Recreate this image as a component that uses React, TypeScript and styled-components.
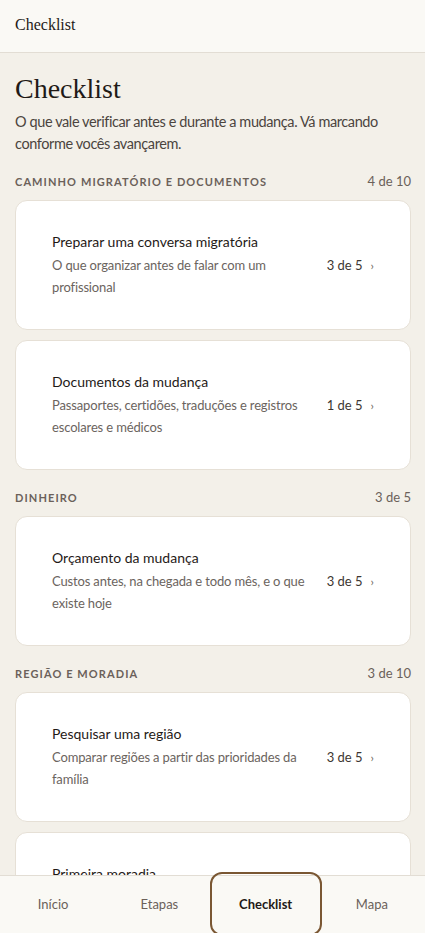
import styled, { createGlobalStyle } from "styled-components";

const GlobalStyle = createGlobalStyle`
    html, body {
        margin: 0;
        padding: 0;
        background: #f3f0e9;
    }
    body {
        font-family: Lato, "Noto Sans", sans-serif;
        color: #2a2420;
    }
    * {
        box-sizing: border-box;
    }
`;

type Item = {
    title: string;
    desc: string;
    done: number;
    total: number;
};

type Group = {
    label: string;
    done: number;
    total: number;
    items: Item[];
};

const groups: Group[] = [
    {
        label: "Caminho migratório e documentos",
        done: 4,
        total: 10,
        items: [
            { title: "Preparar uma conversa migratória", desc: "O que organizar antes de falar com um profissional", done: 3, total: 5 },
            { title: "Documentos da mudança", desc: "Passaportes, certidões, traduções e registros escolares e médicos", done: 1, total: 5 },
        ],
    },
    {
        label: "Dinheiro",
        done: 3,
        total: 5,
        items: [
            { title: "Orçamento da mudança", desc: "Custos antes, na chegada e todo mês, e o que existe hoje", done: 3, total: 5 },
        ],
    },
    {
        label: "Região e moradia",
        done: 3,
        total: 10,
        items: [
            { title: "Pesquisar uma região", desc: "Comparar regiões a partir das prioridades da família", done: 3, total: 5 },
            { title: "Primeira moradia", desc: "O que olhar antes de assinar o primeiro contrato", done: 0, total: 5 },
        ],
    },
];

const tabs = ["Início", "Etapas", "Checklist", "Mapa"];

const App = () => {
    return (
        <Page>
            <GlobalStyle />
            <TopBar>
                <TopTitle>Checklist</TopTitle>
            </TopBar>
            <Main>
                <PageTitle>Checklist</PageTitle>
                <Intro>O que vale verificar antes e durante a mudança. Vá marcando conforme vocês avançarem.</Intro>
                {groups.map((group) => (
                    <Section key={group.label}>
                        <SectionHead>
                            <SectionLabel>{group.label}</SectionLabel>
                            <SectionCount>{group.done} de {group.total}</SectionCount>
                        </SectionHead>
                        <CardList>
                            {group.items.map((item) => (
                                <Card key={item.title}>
                                    <CardText>
                                        <CardTitle>{item.title}</CardTitle>
                                        <CardDesc>{item.desc}</CardDesc>
                                    </CardText>
                                    <CardMeta>
                                        {item.done} de {item.total}
                                        <Chevron>›</Chevron>
                                    </CardMeta>
                                </Card>
                            ))}
                        </CardList>
                    </Section>
                ))}
            </Main>
            <BottomNav>
                {tabs.map((tab) => (
                    <Tab key={tab} active={tab === "Checklist"}>{tab}</Tab>
                ))}
            </BottomNav>
        </Page>
    );
};

export default App;

const Page = styled.div`
    min-height: 100vh;
    background: #f3f0e9;
`;

const TopBar = styled.header`
    height: 53px;
    display: flex;
    align-items: center;
    padding: 0 15px;
    background: #faf9f5;
    border-bottom: 1px solid #e2ddd4;
`;

const TopTitle = styled.span`
    font-family: "Liberation Serif", serif;
    font-size: 16px;
    color: #1f1a17;
    margin-top: -2px;
`;

const Main = styled.main`
    padding: 20px 14px 120px 15px;
`;

const PageTitle = styled.h1`
    margin: 0;
    font-family: "Liberation Serif", serif;
    font-weight: 400;
    font-size: 28px;
    line-height: 32px;
    color: #1f1a17;
`;

const Intro = styled.p`
    margin: 6px 0 0;
    font-size: 14.5px;
    letter-spacing: -0.4px;
    line-height: 22px;
    color: #4b443e;
`;

const Section = styled.section`
    margin-top: 16px;

    & + & {
        margin-top: 17px;
    }
`;

const SectionHead = styled.div`
    display: flex;
    align-items: center;
    justify-content: space-between;
    height: 20px;
    margin-bottom: 9px;
`;

const SectionLabel = styled.span`
    font-size: 11px;
    font-weight: 700;
    letter-spacing: 1.1px;
    text-transform: uppercase;
    color: #6b615a;
`;

const SectionCount = styled.span`
    font-size: 13px;
    color: #6b615a;
`;

const CardList = styled.div`
    display: flex;
    flex-direction: column;
    gap: 10px;
`;

const Card = styled.div`
    display: flex;
    align-items: center;
    gap: 10px;
    min-height: 130px;
    padding: 30px 36px;
    background: #ffffff;
    border: 1px solid #e6e0d6;
    border-radius: 12px;
`;

const CardText = styled.div`
    flex: 1;
    display: flex;
    flex-direction: column;
    gap: 2px;
`;

const CardTitle = styled.span`
    font-size: 14px;
    line-height: 20px;
    color: #1f1a17;
`;

const CardDesc = styled.span`
    font-size: 13px;
    letter-spacing: -0.15px;
    line-height: 22px;
    color: #6b645e;
`;

const CardMeta = styled.span`
    flex: none;
    display: flex;
    align-items: center;
    gap: 8px;
    font-size: 13px;
    color: #3d3631;
`;

const Chevron = styled.span`
    font-size: 12px;
    color: #6b645e;
`;

const BottomNav = styled.nav`
    position: fixed;
    left: 0;
    right: 0;
    bottom: 0;
    height: 58px;
    display: grid;
    grid-template-columns: repeat(4, 1fr);
    background: #faf9f5;
    border-top: 1px solid #e2ddd4;
`;

const Tab = styled.button<{ active?: boolean }>`
    border: none;
    background: transparent;
    font-family: Lato, "Noto Sans", sans-serif;
    font-size: 13px;
    font-weight: ${(p) => (p.active ? 700 : 400)};
    color: ${(p) => (p.active ? "#1f1a17" : "#6b615a")};
    border-radius: 9px;
    outline: ${(p) => (p.active ? "2px solid #7a5733" : "none")};
    outline-offset: 1px;
    margin-top: -1px;
`;
